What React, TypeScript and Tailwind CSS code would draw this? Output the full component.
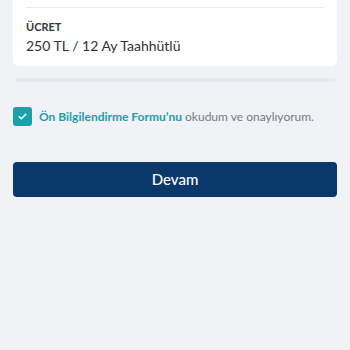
export default function App() {
    return (
        <div className="min-h-[350px] w-[350px] bg-[#f1f2f6] font-['Lato','Noto_Sans',sans-serif]">
            <div className="mx-[13px] rounded-b-[6px] bg-white px-[13px] pb-[11px]">
                <div className="pt-[7px]">
                    <div className="h-px bg-[#e9ebee]" />
                </div>
                <div className="mt-[12px] text-[11px] font-bold leading-[13px] text-[#333840]">ÜCRET</div>
                <div className="mt-[4px] text-[14px] leading-[18px] text-[#2e3238]">250 TL / 12 Ay Taahhütlü</div>
            </div>
            <div className="mx-[15px] mt-[12px] h-[4px] bg-[#e8e9ee]" />
            <div className="mx-[13px] mt-[25px] flex items-center gap-[7px]">
                <div className="flex h-[19px] w-[19px] shrink-0 items-center justify-center rounded-[3px] bg-[#1aa0a9]">
                    <svg width="11" height="11" viewBox="0 0 24 24" fill="none" stroke="white" strokeWidth="3.5" strokeLinecap="round" strokeLinejoin="round">
                        <path d="M5 12.5l4.5 4.5L19 7.5" />
                    </svg>
                </div>
                <div className="text-[12px] leading-[18px] whitespace-nowrap">
                    <span className="font-bold text-[#1aa0a9]">Ön Bilgilendirme Formu’nu</span>{" "}
                    <span className="text-[#767b85]">okudum ve onaylıyorum.</span>
                </div>
            </div>
            <button className="mx-[13px] mt-[36px] flex h-[35px] w-[324px] items-center justify-center rounded-[4px] bg-[#0b386a] text-[15px] font-medium text-white">
                Devam
            </button>
        </div>
    );
}
